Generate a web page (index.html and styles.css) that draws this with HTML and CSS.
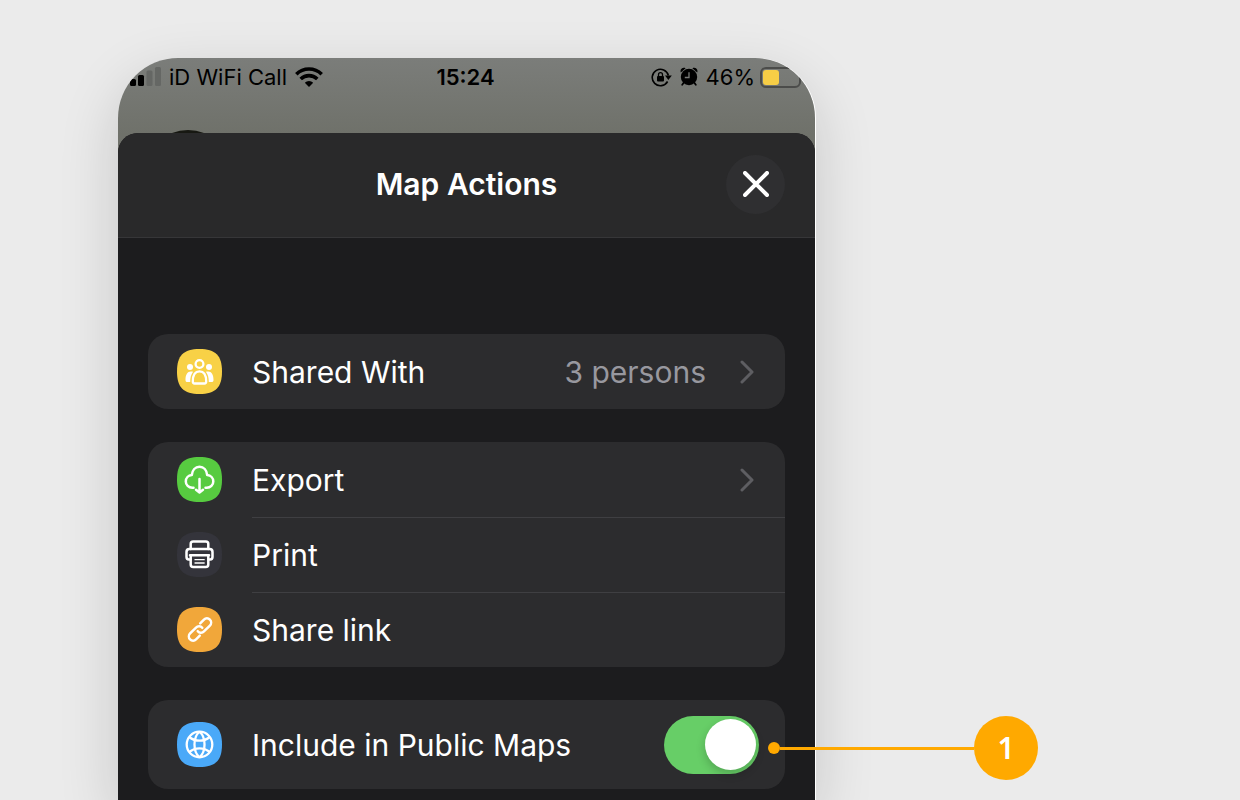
FILE: index.html
```html
<!DOCTYPE html>
<html lang="en">
<head>
    <meta charset="UTF-8">
    <meta name="viewport" content="width=device-width, initial-scale=1">
    <title>Map Actions</title>
    <link rel="stylesheet" href="styles.css">
</head>
<body>

<main class="phone">
    <div class="status-bar">
        <div class="status-left">
            <svg class="signal" width="31" height="20" viewBox="0 0 31 20">
                <rect x="0" y="12" width="6" height="7" rx="1.5"/>
                <rect x="8" y="8" width="6" height="11" rx="1.5"/>
                <rect x="16.500" y="3.500" width="6" height="15.500" rx="1.5" fill="#656764"/>
                <rect x="25" y="0" width="6" height="19" rx="1.5" fill="#656764"/>
            </svg>
            <span>iD WiFi Call</span>
            <svg width="28" height="20" viewBox="0 0 28 20" fill="none" stroke="#000" stroke-width="3.600">
                <path d="M1.300 7.200a18.200 18.200 0 0 1 25.400 0"/>
                <path d="M5.700 12a12 12 0 0 1 16.600 0"/>
                <path d="M14 20l-4.200-4.200a6 6 0 0 1 8.400 0z" fill="#000" stroke="none"/>
            </svg>
        </div>
        <time class="status-time">15:24</time>
        <div class="status-right">
            <svg width="21" height="20" viewBox="0 0 21 20" fill="none" stroke="#000" stroke-width="1.6">
                <path d="M16.600 14.500A8.200 8.200 0 1 1 17.400 8.500"/>
                <path d="M14 8.500h6.800l-3.400 4.500z" fill="#000" stroke="none"/>
                <rect x="6" y="9" width="7" height="5.500" rx="1" fill="#000" stroke="none"/>
                <path d="M7.500 9.500V7.700a2 2 0 0 1 4 0v1.800" stroke-width="1.300"/>
            </svg>
            <svg class="alarm" width="18" height="20" viewBox="0 0 18 20">
                <circle cx="9" cy="10" r="8.200"/>
                <path d="M.8 5.500C-.4 2.500 2.500-.2 5.600 1.300zM17.200 5.500C18.400 2.500 15.500-.2 12.400 1.300z"/>
                <path d="M3.500 16l-1.300 1.800M14.500 16l1.300 1.800" stroke="#000" stroke-width="1.800" stroke-linecap="round"/>
                <path d="M9 5.200v5.300H4.800" fill="none" stroke="#787a77" stroke-width="1.300"/>
            </svg>
            <span>46%</span>
            <svg class="battery" width="41" height="21" viewBox="0 0 41 21">
                <rect x="1" y="1" width="39" height="19" rx="5" fill="none" stroke="#4b4c4a" stroke-width="2"/>
                <rect x="3" y="3" width="16" height="15" rx="3" fill="#f7ce46"/>
            </svg>
        </div>
    </div>

    <section class="sheet">
        <header class="sheet-header">
            <h1>Map Actions</h1>
            <button class="close" type="button" aria-label="Close">
                <svg width="26" height="26" viewBox="0 0 26 26" fill="none" stroke="#fff" stroke-width="4" stroke-linecap="round">
                    <path d="M2 2l22 22M24 2L2 24"/>
                </svg>
            </button>
        </header>

        <div class="groups">
            <div class="group">
                <button class="row" type="button">
                    <svg class="icon" viewBox="0 0 45 45">
                        <path d="M0 22.500C0 6.500 6.500 0 22.500 0S45 6.500 45 22.500 38.500 45 22.500 45 0 38.500 0 22.500z" fill="#f8d146"/>
                        <g fill="#fff">
                            <circle cx="13" cy="18" r="3"/>
                            <circle cx="32" cy="18" r="3"/>
                            <path d="M13.800 22.500c-3.300 0-5.300 3-5.300 8.500 0 1.500.6 2 2 2h2.700c0-4.300.8-7.500 2.900-10.200-.7-.2-1.500-.3-2.300-.3z"/>
                            <path d="M31.200 22.500c3.300 0 5.300 3 5.300 8.500 0 1.500-.6 2-2 2h-2.700c0-4.300-.8-7.500-2.900-10.200.7-.2 1.500-.3 2.300-.3z"/>
                        </g>
                        <g fill="none" stroke="#fff" stroke-width="2.300">
                            <circle cx="22.500" cy="15" r="3.900"/>
                            <path d="M22.500 22.300c-4.500 0-6.700 4-6.700 10.200 0 1.300.5 2 1.800 2h9.800c1.300 0 1.800-.7 1.800-2 0-6.200-2.200-10.200-6.700-10.200z"/>
                        </g>
                    </svg>
                    <span class="label">Shared With</span>
                    <span class="value">3 persons</span>
                    <svg class="chevron" viewBox="0 0 14 24"><path d="M2 2l10 10L2 22"/></svg>
                </button>
            </div>

            <div class="group">
                <button class="row" type="button">
                    <svg class="icon" viewBox="0 0 45 45">
                        <path d="M0 22.500C0 6.500 6.500 0 22.500 0S45 6.500 45 22.500 38.500 45 22.500 45 0 38.500 0 22.500z" fill="#57cb40"/>
                        <g fill="none" stroke="#fff" stroke-width="2.500" stroke-linecap="round" stroke-linejoin="round">
                            <path d="M16.500 30.800h-1.200c-3.700 0-6.500-2.800-6.500-6.300 0-3.400 2.500-6.200 6-6.400.5-4.700 3.500-8.300 7.700-8.300s7.200 3.600 7.700 8.300c3.500.2 6.100 3 6.100 6.400 0 3.500-2.800 6.300-6.500 6.300h-1.300"/>
                            <path d="M22.500 22v13.300M19 32.800l3.500 2.700 3.500-2.700"/>
                        </g>
                    </svg>
                    <span class="label">Export</span>
                    <svg class="chevron" viewBox="0 0 14 24"><path d="M2 2l10 10L2 22"/></svg>
                </button>
                <button class="row" type="button">
                    <svg class="icon" viewBox="0 0 45 45">
                        <path d="M0 22.500C0 6.500 6.500 0 22.500 0S45 6.500 45 22.500 38.500 45 22.500 45 0 38.500 0 22.500z" fill="#34343b"/>
                        <g fill="none" stroke="#fff" stroke-width="2.500" stroke-linecap="round" stroke-linejoin="round">
                            <path d="M13.700 17v-5c0-1.700.8-2.500 2.500-2.500h12.600c1.700 0 2.500.8 2.500 2.500v5"/>
                            <path d="M13.500 27.500h-1.700c-1.600 0-2.300-.8-2.300-2.400v-5.200c0-1.900 1-2.900 2.900-2.900h20.200c1.900 0 2.900 1 2.900 2.900v5.200c0 1.600-.7 2.400-2.300 2.400h-1.700"/>
                            <path d="M13 23.300h19M13.700 23.300v9.200c0 1.700.8 2.500 2.500 2.500h12.600c1.700 0 2.500-.8 2.500-2.500v-9.200"/>
                            <path d="M18 27.700h9.200M18 31h9.200" stroke-width="1.300"/>
                        </g>
                    </svg>
                    <span class="label">Print</span>
                </button>
                <button class="row" type="button">
                    <svg class="icon" viewBox="0 0 45 45">
                        <path d="M0 22.500C0 6.500 6.500 0 22.500 0S45 6.500 45 22.500 38.500 45 22.500 45 0 38.500 0 22.500z" fill="#f1a73a"/>
                        <g transform="translate(23 22.500) rotate(-45)" fill="none" stroke="#fff" stroke-width="2.500" stroke-linecap="round">
                            <path d="M-4.500 4.200H-9.800a4.200 4.200 0 0 1 0-8.400H-1.400a4.200 4.200 0 0 1 4.200 4.600"/>
                            <path d="M4.500-4.200H9.800a4.200 4.200 0 0 1 0 8.400H1.400a4.200 4.200 0 0 1-4.200-4.600"/>
                        </g>
                    </svg>
                    <span class="label">Share link</span>
                </button>
            </div>

            <div class="group">
                <label class="row row-toggle">
                    <svg class="icon" viewBox="0 0 45 45">
                        <path d="M0 22.500C0 6.500 6.500 0 22.500 0S45 6.500 45 22.500 38.500 45 22.500 45 0 38.500 0 22.500z" fill="#4aa9f8"/>
                        <g fill="none" stroke="#fff" stroke-width="2.300">
                            <circle cx="22.500" cy="22.500" r="12.800"/>
                            <path d="M22.500 9.700c-6.700 5.600-6.700 20 0 25.600M22.500 9.700c6.700 5.600 6.700 20 0 25.600"/>
                            <path d="M12.300 15c5.800 4.900 14.600 4.900 20.400 0M12.300 30c5.800-4.900 14.600-4.900 20.400 0"/>
                        </g>
                    </svg>
                    <span class="label">Include in Public Maps</span>
                    <input class="toggle" type="checkbox" checked>
                </label>
                <div class="callout">
                    <span class="callout-dot"></span>
                    <span class="callout-line"></span>
                    <span class="callout-number">1</span>
                </div>
            </div>
        </div>
    </section>
</main>

</body>
</html>
```

FILE: styles.css
```css
* {
    box-sizing: border-box;
}

body {
    margin: 0;
    min-height: 100vh;
    max-height: 100vh;
    padding: 58px 0 0 118px;
    display: flex;
    overflow: hidden;
    background: #ebebeb;
    font-family: Inter, "Liberation Sans", sans-serif;
}

.phone {
    flex: 1;
    max-width: 697px;
    min-height: 100%;
    border-radius: 60px 60px 0 0;
    background: linear-gradient(#7b7d7a, #6f716a 76px, #6f716a 100px, #1c1c1e 100px);
    box-shadow: 1px 0 0 #fff, 0 20px 60px rgba(0, 0, 0, 0.16);
}

/* status bar */

.status-bar {
    position: relative;
    display: grid;
    grid-template-columns: 1fr auto 1fr;
    height: 75px;
    padding: 0 14px 37px 12px;
    align-items: center;
    border-radius: 60px 60px 0 0;
    overflow: hidden;
    font-size: 22px;
    line-height: 28px;
    color: #000;
}

/* top of the map button that the sheet covers */
.status-bar::after {
    content: "";
    position: absolute;
    left: 26px;
    top: 72px;
    width: 88px;
    height: 88px;
    border-radius: 50%;
    background: #171812;
}

.status-left,
.status-right {
    display: flex;
    align-items: center;
    gap: 8px;
}

.status-right {
    justify-content: flex-end;
}

.status-time {
    font-weight: 600;
}

.battery {
    margin-left: -3px;
}

/* sheet */

.sheet {
    border-radius: 20px 20px 0 0;
    background: #1c1c1e;
}

.sheet-header {
    display: grid;
    grid-template-columns: 1fr auto 1fr;
    align-items: center;
    height: 105px;
    padding: 0 30px 2px;
    border-bottom: 1px solid #363638;
    border-radius: 20px 20px 0 0;
    background: #29292a;
}

.sheet-header h1 {
    grid-column: 2;
    margin: 0;
    font-size: 30px;
    line-height: 40px;
    font-weight: 600;
    color: #fff;
}

.close {
    display: flex;
    align-items: center;
    justify-content: center;
    justify-self: end;
    width: 59px;
    height: 59px;
    padding: 0;
    border: 0;
    border-radius: 50%;
    background: #2f2f31;
}

.groups {
    display: flex;
    flex-direction: column;
    gap: 33px;
    padding: 96px 30px 33px;
}

.group {
    position: relative;
    border-radius: 20px;
    background: #2c2c2e;
}

.row {
    position: relative;
    display: flex;
    align-items: center;
    gap: 30px;
    width: 100%;
    height: 75px;
    padding: 0 30px 0 29px;
    border: 0;
    background: none;
    font-family: inherit;
    font-size: 30px;
    line-height: 40px;
    text-align: left;
    color: #fff;
}

.row + .row::before {
    content: "";
    position: absolute;
    top: 0;
    left: 104px;
    right: 0;
    height: 1px;
    background: #3f3f42;
}

.icon {
    flex: none;
    width: 45px;
    height: 45px;
}

.label {
    flex: 1;
}

.value {
    margin-right: 3px;
    color: #98989f;
}

.chevron {
    flex: none;
    width: 16px;
    height: 24px;
    fill: none;
    stroke: #5e5e62;
    stroke-width: 3;
    stroke-linecap: round;
    stroke-linejoin: round;
}

.row-toggle {
    height: 89px;
    padding-right: 26px;
}

.toggle {
    appearance: none;
    flex: none;
    display: flex;
    align-items: center;
    width: 95px;
    height: 58px;
    margin: 0;
    padding: 0 3px;
    border-radius: 29px;
    background: #39393d;
}

.toggle::before {
    content: "";
    width: 51px;
    height: 51px;
    border-radius: 50%;
    background: #fff;
    box-shadow: 0 4px 10px rgba(0, 0, 0, 0.2);
}

.toggle:checked {
    justify-content: flex-end;
    background: #67ce67;
}

/* numbered callout */

.callout {
    position: absolute;
    top: 16px;
    left: calc(100% - 17px);
    display: flex;
    align-items: center;
    width: 270px;
}

.callout-dot {
    width: 12px;
    height: 12px;
    border-radius: 50%;
    background: #ffa900;
}

.callout-line {
    flex: 1;
    height: 3px;
    background: #ffa900;
}

.callout-number {
    width: 64px;
    height: 64px;
    border-radius: 50%;
    background: #ffa900;
    font-family: "Noto Sans", sans-serif;
    font-size: 30px;
    line-height: 64px;
    font-weight: 600;
    text-align: center;
    color: #fff;
}
```
